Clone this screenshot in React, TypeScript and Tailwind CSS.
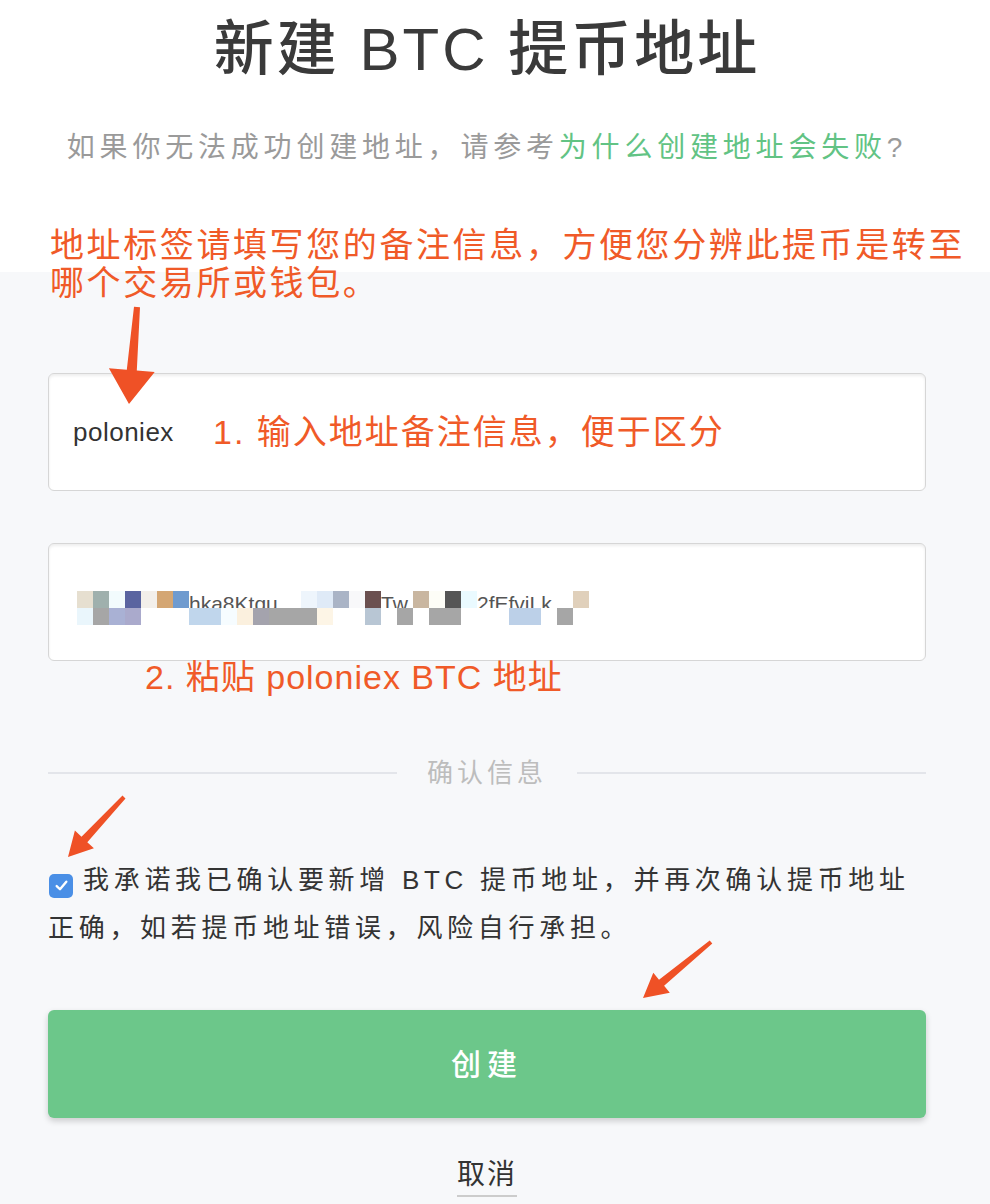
import React from "react";

type Cell = { c?: string; t?: string; n?: number };

const row1: Cell[] = [
  { c: "#e6dfd0" }, { c: "#9fb0ad" }, { c: "#f2fbfd" }, { c: "#5a64a0" }, { c: "#f3efea" }, { c: "#d4a673" }, { c: "#6f9bcf" },
  { t: "hka8Ktqu", n: 7 },
  { c: "#eef5fc" }, { c: "#dfeaf7" }, { c: "#aab4c6" }, { c: "#f8f8fa" }, { c: "#6b5050" },
  { t: "Tw", n: 2 },
  { c: "#c9b6a0" }, { c: "#fdfdf7" }, { c: "#555555" }, { c: "#eafaff" },
  { t: "2fEfviLk", n: 6 },
  { c: "#e0d0bb" },
];

const row2: Cell[] = [
  { c: "#eaf6fc" }, { c: "#a6a6a6" }, { c: "#a9b1d4" }, { c: "#aaaacc" }, { c: "#ffffff", n: 3 },
  { c: "#c0d6ec", n: 2 }, { c: "#f6fcff" }, { c: "#fbf0de" }, { c: "#a4a3ad" }, { c: "#a6a6a6", n: 3 },
  { c: "#fdf5e6" }, { c: "#ffffff", n: 2 }, { c: "#b8c6d4" }, { c: "#ffffff" }, { c: "#a6a6a6" }, { c: "#ffffff" },
  { c: "#a6a6a6", n: 2 }, { c: "#ffffff", n: 3 }, { c: "#bcd0e8", n: 2 }, { c: "#ffffff" }, { c: "#a6a6a6" }, { c: "#ffffff" },
];

function MosaicRow({ cells, top }: { cells: Cell[]; top?: boolean }) {
  return (
    <div className={top ? "relative z-0 flex h-[17px]" : "relative z-10 flex h-[17px]"}>
      {cells.map((cell, i) =>
        cell.t ? (
          <div
            key={i}
            className="h-[17px] bg-white pt-[1px] text-[21px] leading-[24px] text-[#555] font-['Liberation_Sans',sans-serif] whitespace-nowrap"
            style={{ width: (cell.n ?? 1) * 16 }}
          >
            {cell.t}
          </div>
        ) : (
          <div key={i} className="h-[17px]" style={{ width: (cell.n ?? 1) * 16, backgroundColor: cell.c }} />
        )
      )}
    </div>
  );
}

function arrowPoints(
  x1: number, y1: number, x2: number, y2: number,
  tailW: number, shaftW: number, headW: number, headL: number
) {
  const dx = x2 - x1;
  const dy = y2 - y1;
  const len = Math.hypot(dx, dy);
  const ux = dx / len;
  const uy = dy / len;
  const px = -uy;
  const py = ux;
  const bx = x2 - ux * headL;
  const by = y2 - uy * headL;
  const pts: [number, number][] = [
    [x1 + (px * tailW) / 2, y1 + (py * tailW) / 2],
    [bx + (px * shaftW) / 2, by + (py * shaftW) / 2],
    [bx + (px * headW) / 2, by + (py * headW) / 2],
    [x2, y2],
    [bx - (px * headW) / 2, by - (py * headW) / 2],
    [bx - (px * shaftW) / 2, by - (py * shaftW) / 2],
    [x1 - (px * tailW) / 2, y1 - (py * tailW) / 2],
  ];
  return pts.map((p) => `${p[0].toFixed(1)},${p[1].toFixed(1)}`).join(" ");
}

export default function App() {
  return (
    <div className="relative w-[990px] h-[1204px] overflow-hidden bg-[#f7f8fa] font-['Liberation_Sans','Noto_Sans_CJK_SC',sans-serif]">
      <div className="h-[272px] bg-white flex flex-col items-center pl-[48px] pr-[64px]">
        <h1 className="mt-[14px] text-[60px] leading-[72px] tracking-[3px] text-[#3a3a3a] font-medium whitespace-nowrap">
          新建 BTC 提币地址
        </h1>
        <p className="mt-[42px] text-[28px] leading-[40px] tracking-[4.8px] text-[#9a9a9a] whitespace-nowrap">
          如果你无法成功创建地址，请参考<span className="text-[#62c384]">为什么创建地址会失败</span>?
        </p>
      </div>

      <div className="pl-[48px] pr-[64px]">
        <div className="mt-[101px] h-[118px] rounded-[6px] border border-[#d6d6d6] bg-white shadow-[inset_0_2px_3px_rgba(0,0,0,0.07)] flex items-center pl-[24px]">
          <span className="w-[140px] text-[26px] leading-[36px] text-[#333] tracking-[0.5px]">poloniex</span>
          <span className="text-[34px] leading-[40px] tracking-[2px] text-[#f05a28] whitespace-nowrap">
            1. 输入地址备注信息，便于区分
          </span>
        </div>

        <div className="mt-[52px] h-[118px] rounded-[6px] border border-[#d6d6d6] bg-white shadow-[inset_0_2px_3px_rgba(0,0,0,0.07)] flex items-center pl-[28px] pt-[12px]">
          <div className="flex flex-col">
            <MosaicRow cells={row1} top />
            <MosaicRow cells={row2} />
          </div>
        </div>

        <p className="mt-[-1px] ml-[97px] text-[34px] leading-[34px] tracking-[1px] text-[#f05a28] whitespace-nowrap">
          2. 粘贴 poloniex BTC 地址
        </p>

        <div className="mt-[64px] h-[30px] flex items-center gap-[30px]">
          <div className="flex-1 h-[2px] bg-[#e3e5ea]" />
          <span className="text-[26px] leading-[30px] tracking-[4px] text-[#bdbdbd] whitespace-nowrap">确认信息</span>
          <div className="flex-1 h-[2px] bg-[#e3e5ea]" />
        </div>

        <p className="mt-[68px] text-[26px] leading-[48px] tracking-[4.7px] text-[#333] whitespace-nowrap">
          <span className="inline-flex align-[-4px] ml-[1px] mr-[10px] w-[24px] h-[24px] rounded-[5px] bg-[#4a8fe6] items-center justify-center">
            <svg width="15" height="15" viewBox="0 0 14 14" fill="none">
              <path d="M2.5 7.5 L5.6 10.5 L11.5 3.5" stroke="white" strokeWidth="2.2" strokeLinecap="round" strokeLinejoin="round" />
            </svg>
          </span>
          我承诺我已确认要新增 BTC 提币地址，并再次确认提币地址
          <br />
          正确，如若提币地址错误，风险自行承担。
        </p>

        <button className="mt-[58px] w-full h-[108px] rounded-[6px] bg-[#6cc78a] shadow-[0_3px_6px_rgba(0,0,0,0.18)] text-white text-[30px] font-medium tracking-[6px] flex items-center justify-center">
          创建
        </button>

        <div className="mt-[37px] flex justify-center">
          <span className="text-[28px] leading-[40px] tracking-[2px] text-[#333] border-b-2 border-[#cccccc]">取消</span>
        </div>
      </div>

      <p className="absolute left-[50px] top-[226px] text-[34px] leading-[38px] tracking-[2.6px] text-[#f05a28] whitespace-nowrap">
        地址标签请填写您的备注信息，方便您分辨此提币是转至
        <br />
        哪个交易所或钱包。
      </p>

      <svg className="absolute left-0 top-0 pointer-events-none" width="990" height="1204" viewBox="0 0 990 1204">
        <polygon points={arrowPoints(137, 307, 129, 404, 6, 10, 46, 34)} fill="#ef5126" />
        <polygon points={arrowPoints(124, 797, 68, 857, 4, 8, 26, 24)} fill="#ef5126" />
        <polygon points={arrowPoints(711, 942, 643, 998, 4, 8, 26, 24)} fill="#ef5126" />
      </svg>
    </div>
  );
}
